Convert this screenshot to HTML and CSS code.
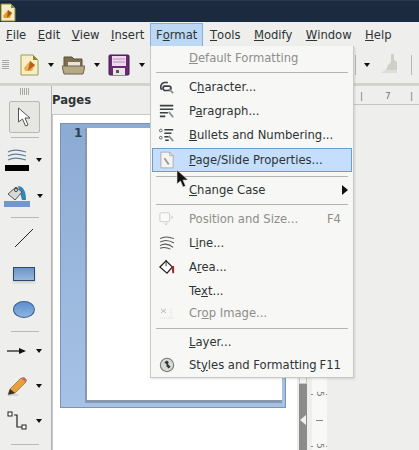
FILE: index.html
```html
<!DOCTYPE html>
<html lang="en">
<head>
<meta charset="utf-8">
<title>Format menu</title>
<link rel="stylesheet" href="styles.css">
</head>
<body>
<div class="app">
  <header class="titlebar">
    <svg class="title-icon" width="16" height="19" viewBox="0 0 16 19"><path d="M1 1h10l4 4v13H1z" fill="#f4ecc4" stroke="#8e8a3c"/><path d="M11 1l4 4h-4z" fill="#8e8a3c"/><path d="M3 13l5-6 4 3-2 5H4z" fill="#e99b2a"/><path d="M8 7l4 3-5 5z" fill="#a8551c"/></svg>
  </header>
  <nav class="menubar">
    <span class="menu-item"><u>F</u>ile</span>
    <span class="menu-item"><u>E</u>dit</span>
    <span class="menu-item"><u>V</u>iew</span>
    <span class="menu-item"><u>I</u>nsert</span>
    <span class="menu-item menu-item-open">F<u>o</u>rmat</span>
    <span class="menu-item"><u>T</u>ools</span>
    <span class="menu-item"><u>M</u>odify</span>
    <span class="menu-item"><u>W</u>indow</span>
    <span class="menu-item"><u>H</u>elp</span>
  </nav>
  <div class="toolbar">
    <span class="grip"></span>
    <svg class="tb-doc" width="19" height="22" viewBox="0 0 19 22"><path d="M1 1h12l5 5v15H1z" fill="#f6eec6" stroke="#a09c4a"/><path d="M13 1l5 5h-5z" fill="#8e8a3c"/><path d="M4 14l6-7 5 4-3 6H5z" fill="#eeb04e"/><path d="M10 7l5 4-7 6z" fill="#b4601e"/></svg>
    <span class="drop"></span>
    <svg class="tb-folder" width="23" height="21" viewBox="0 0 23 21"><path d="M2 3h8l2 2h8v12H2z" fill="#7d6f50" stroke="#5a5038"/><rect x="6" y="8" width="12" height="8" fill="#e8e4dc"/><path d="M0 12h23l-2 8H2z" fill="#b5a988" stroke="#6e6448"/></svg>
    <span class="drop"></span>
    <svg class="tb-save" width="22" height="22" viewBox="0 0 22 22"><rect x="1" y="1" width="20" height="20" rx="1" fill="#6a2a72" stroke="#42204c"/><rect x="4" y="2" width="14" height="10" fill="#f0d8ee"/><path d="M5 5h12M5 8h12" stroke="#b890b8"/><rect x="5" y="14" width="12" height="7" fill="#e8e6e0"/><rect x="8" y="16" width="3" height="3" fill="#555"/></svg>
    <span class="drop"></span>
    <span class="toolbar-spacer"></span>
    <span class="tb-sep"></span>
    <span class="drop drop-right"></span>
    <svg class="tb-brush" width="20" height="23" viewBox="0 0 20 23"><path d="M11 1h3v6l3 2v11H1c4-1 6-4 7-8l3-3z" fill="#cfcfc9"/><path d="M5 17h12v3H1z" fill="#deded8"/></svg>
    <span class="tb-sep tb-sep-last"></span>
  </div>
  <div class="main">
    <aside class="sidetools">
      <span class="side-grip"></span>
      <div class="select-tool">
        <svg width="15" height="20" viewBox="0 0 15 20"><path d="M1.500 1v14l4-3 3 7 2.500-1-3-7h5z" fill="#fff" stroke="#555" stroke-linejoin="round"/></svg>
      </div>
      <span class="side-sep"></span>
      <div class="tool tool-line-color">
        <div class="swatch-tool">
          <svg width="20" height="13" viewBox="0 0 20 13"><path d="M1 3c5-3 12-2 18 0M1 7c5-3 12-2 18 0M1 11c5-3 12-2 18 0" fill="none" stroke="#5f7f9f" stroke-width="1.200"/></svg>
          <span class="swatch swatch-black"></span>
        </div>
        <span class="drop"></span>
      </div>
      <div class="tool tool-area-color">
        <div class="swatch-tool">
          <svg width="22" height="16" viewBox="0 0 22 16"><path d="M12 1c5 0 8 5 8 14h-4z" fill="#2f86b8"/><path d="M2 9l8-7 6 5-7 8z" fill="#d8d8d4" stroke="#555"/><circle cx="10" cy="5" r="1.500" fill="#fff" stroke="#333"/></svg>
          <span class="swatch swatch-blue"></span>
        </div>
        <span class="drop"></span>
      </div>
      <span class="side-sep side-sep-area"></span>
      <div class="tool tool-shape tool-line">
        <svg width="20" height="20" viewBox="0 0 20 20"><path d="M1 19L19 1" stroke="#222"/></svg>
      </div>
      <div class="tool tool-shape tool-rect">
        <span class="rect-shape"></span>
      </div>
      <div class="tool tool-shape tool-ellipse">
        <span class="ellipse-shape"></span>
      </div>
      <span class="side-sep side-sep-ellipse"></span>
      <div class="tool tool-row tool-tall">
        <svg width="20" height="8" viewBox="0 0 20 8"><path d="M0 4h14" stroke="#111" stroke-width="1.200"/><path d="M12 1l7 3-7 3z" fill="#111"/></svg>
        <span class="drop"></span>
      </div>
      <div class="tool tool-row tool-short">
        <svg width="20" height="19" viewBox="0 0 20 19"><path d="M1 18l2-6L14 1l5 4L8 16z" fill="#e9a03c" stroke="#8a5a20" stroke-width=".6"/><path d="M14 1l5 4 1-2-3-3z" fill="#d0606a"/><path d="M1 18l2-6 5 4z" fill="#333"/><path d="M1 18h10" stroke="#bbb"/></svg>
        <span class="drop"></span>
      </div>
      <div class="tool tool-row tool-tall">
        <svg width="20" height="20" viewBox="0 0 20 20"><path d="M7 4h3v12h5" fill="none" stroke="#222" stroke-width="1.200"/><rect x="1" y="1" width="4" height="4" fill="#fff" stroke="#222"/><rect x="15" y="14" width="4" height="4" fill="#fff" stroke="#222"/></svg>
        <span class="drop"></span>
      </div>
      <span class="side-sep side-sep-end"></span>
    </aside>
    <section class="pages">
      <h2 class="pages-title">Pages</h2>
      <div class="pages-list">
        <div class="slide">
          <span class="slide-num">1</span>
          <div class="slide-page"></div>
        </div>
      </div>
    </section>
    <div class="splitter">
      <span class="splitter-top"></span>
      <div class="splitter-bar"><span class="splitter-arrow"></span></div>
    </div>
    <div class="editor">
      <div class="hruler">
        <span class="htick">|</span><span class="htick">7</span><span class="htick">|</span>
      </div>
      <div class="editor-body">
        <div class="vruler">
          <div class="vmark"><span class="vnum">5</span></div>
          <div class="vdash"></div>
          <div class="vmark"><span class="vnum">5</span></div>
        </div>
        <div class="canvas"></div>
      </div>
    </div>
  </div>

  <div class="format-menu">
    <div class="row row-first disabled"><span class="ico"></span><span class="lbl"><u>D</u>efault Formatting</span></div>
    <div class="sep sep-a"></div>
    <div class="row"><span class="ico"><svg width="16" height="16" viewBox="0 0 18 18"><path d="M3 12a5 5 0 0 1 3-8h4M5 8h6a2 2 0 0 1 0 5H7a2 2 0 0 1 0-5" fill="none" stroke="#3a3f44" stroke-width="1.800"/><path d="M11 11l5 5" stroke="#8b8f92" stroke-width="2"/></svg></span><span class="lbl">C<u>h</u>aracter...</span></div>
    <div class="row"><span class="ico"><svg width="16" height="16" viewBox="0 0 18 18"><path d="M1 3h15M1 7h15M1 11h9M1 15h6" stroke="#3a3f44" stroke-width="1.800"/><path d="M11 10l5 6" stroke="#8b8f92" stroke-width="2"/></svg></span><span class="lbl">P<u>a</u>ragraph...</span></div>
    <div class="row"><span class="ico"><svg width="16" height="16" viewBox="0 0 18 18"><circle cx="2" cy="4" r="1.500" fill="none" stroke="#555"/><circle cx="2" cy="12" r="1.500" fill="none" stroke="#555"/><path d="M6 3h10M6 7h8M6 11h5M7 15h4" stroke="#3a3f44" stroke-width="1.600"/><path d="M11 10l5 6" stroke="#8b8f92" stroke-width="2"/></svg></span><span class="lbl"><u>B</u>ullets and Numbering...</span></div>
    <div class="row row-active"><span class="ico"><svg width="14" height="18" viewBox="0 0 16 20"><path d="M1 1h10l4 4v14H1z" fill="#f4f4f2" stroke="#a8a8a8"/><path d="M11 1v4h4" fill="none" stroke="#a8a8a8"/><path d="M5 8l5 7" stroke="#999" stroke-width="2"/></svg></span><span class="lbl"><u>P</u>age/Slide Properties...</span></div>
    <div class="sep sep-b"></div>
    <div class="row"><span class="ico"></span><span class="lbl"><u>C</u>hange Case</span><span class="submenu-arrow"></span></div>
    <div class="sep sep-c"></div>
    <div class="row disabled"><span class="ico"><svg width="16" height="16" viewBox="0 0 18 18"><rect x="1" y="2" width="11" height="10" rx="1.500" fill="#fafaf8" stroke="#c6c9c6"/><path d="M14 5l2 2-2 2zM6 14h4l-2 2z" fill="#c6c9c6"/></svg></span><span class="lbl">Position and Size...</span><span class="key">F4</span></div>
    <div class="row"><span class="ico"><svg width="16" height="14" viewBox="0 0 18 16"><path d="M1 3c5-3 11-2 16 0M1 7c5-3 11-2 16 1M1 11c5-3 10-2 15 2M1 14c5-2 8-1 12 1" fill="none" stroke="#555" stroke-width="1.200"/></svg></span><span class="lbl">L<u>i</u>ne...</span></div>
    <div class="row"><span class="ico"><svg width="16" height="16" viewBox="0 0 18 18"><path d="M1 9l7-7 7 7-6 7z" fill="#fff" stroke="#222" stroke-width="1.400"/><path d="M8 1v7" stroke="#222"/><path d="M14 8h3v8h-2z" fill="#9c2f2f"/></svg></span><span class="lbl">A<u>r</u>ea...</span></div>
    <div class="row row-text"><span class="ico"></span><span class="lbl">Te<u>x</u>t...</span></div>
    <div class="row row-crop disabled"><span class="ico"><svg width="16" height="14" viewBox="0 0 16 14"><path d="M2 3l5 4M2 7l5-4" stroke="#b8b8b4"/><path d="M1 12h14M12 2v9" stroke="#dcdcd8" stroke-dasharray="1 1"/></svg></span><span class="lbl">Cr<u>o</u>p Image...</span></div>
    <div class="sep sep-d"></div>
    <div class="row row-tight"><span class="ico"></span><span class="lbl"><u>L</u>ayer...</span></div>
    <div class="row row-tight"><span class="ico"><svg width="16" height="16" viewBox="0 0 18 18"><circle cx="9" cy="9" r="7.500" fill="#d9d9d6" stroke="#77787a" stroke-width="1.200"/><path d="M6 6l3 3-1 1 3 3 2-2-3-3 1-2-2-2z" fill="#33373a"/></svg></span><span class="lbl">St<u>y</u>les and Formatting</span><span class="key">F11</span></div>
  </div>

  <svg class="cursor" width="14" height="19" viewBox="0 0 14 19"><path d="M1 1v14l3.500-3 2.500 6 2.500-1-2.500-6h5z" fill="#111" stroke="#ddd" stroke-width=".6"/></svg>
</div>
</body>
</html>
```
FILE: styles.css
```css
* { box-sizing: border-box; }
html, body { margin: 0; padding: 0; }
body { background: #eeeeec; font-family: "DejaVu Sans", sans-serif; font-size: 11.6px; color: #2e3436; }
.app { position: relative; width: 419px; height: 450px; overflow: hidden; display: flex; flex-direction: column; background: #eeeeec; }

.titlebar { height: 22px; flex: none; background: #1b2a3e; border-top: 1px solid #2a3a4e; }
.title-icon { display: block; margin-top: 2px; }

.menubar { height: 24px; flex: none; display: flex; align-items: stretch; background: #eeeeec; padding-top: 1px; }
.menu-item { display: flex; align-items: center; padding: 0 5.750px 0 5.750px; white-space: pre; }
.menubar .menu-item:first-child { padding-left: 6px; }
.menu-item-open { background: #bcd8f4; border: 1px solid #88b0d8; border-bottom: 0; padding: 0 5px; }
.menu-item-open ~ .menu-item { padding: 0 6.700px; }

.toolbar { height: 40px; flex: none; display: flex; align-items: center; padding-left: 2px; background: #eeeeec; border-bottom: 3px solid #d2d2ce; }
.grip { width: 7px; height: 10px; margin-right: 11px; background: repeating-linear-gradient(#a8a8a4 0 1px, transparent 1px 2px); }
.drop { flex: none; width: 0; height: 0; border-left: 3.500px solid transparent; border-right: 3.500px solid transparent; border-top: 4px solid #111; }
.toolbar .drop { margin: 0 8px 0 9px; }
.toolbar-spacer { flex: 1; }
.tb-sep { width: 1px; height: 20px; background: #b8b8b4; }
.toolbar .drop-right { margin: 0 10px 0 8px; }
.tb-sep-last { margin: 0 7px 0 11px; }

.main { flex: 1; min-height: 0; display: flex; }

.sidetools { width: 52px; flex: none; display: flex; flex-direction: column; align-items: flex-start; border-right: 1px solid #b4b4b0; background: #eeeeec; }
.side-grip { width: 9px; height: 7px; margin: 2px 0 0 20px; background: repeating-linear-gradient(90deg, #a8a8a4 0 1px, transparent 1px 2px); }
.select-tool { width: 31px; height: 32px; margin: 6px 0 0 9px; display: flex; align-items: center; justify-content: center; background: #e6e6e3; border: 1px solid #b8b8b4; border-radius: 2px; }
.side-sep { width: 28px; height: 1px; flex: none; margin-left: 11px; background: #b8b8b4; }
.select-tool + .side-sep { margin-top: 4px; }
.tool { display: flex; align-items: center; flex: none; }
.tool-line-color { height: 32px; margin-top: 6px; padding-left: 5px; gap: 7px; }
.tool-area-color { height: 34px; margin-top: 3px; padding-left: 4px; gap: 7px; }
.swatch-tool { display: flex; flex-direction: column; align-items: center; }
.swatch { display: block; height: 6px; }
.swatch-black { width: 24px; background: #000; margin-top: 3px; }
.swatch-blue { width: 26px; background: #7396cf; }
.side-sep-area { margin-top: 4px; }
.tool-shape { width: 48px; justify-content: center; }
.tool-line { height: 40px; }
.tool-rect { height: 32px; }
.tool-ellipse { height: 38px; }
.rect-shape { width: 22px; height: 14px; background: linear-gradient(#6c94c8, #9ab8dc); border: 1px solid #2c4a6c; box-shadow: 0 2px 2px #d0d0cc; }
.ellipse-shape { width: 22px; height: 17px; border-radius: 50%; background: linear-gradient(#5c90d0, #8cb4e0); border: 1px solid #3c5c88; }
.side-sep-ellipse { margin-top: 3px; }
.tool-row { padding-left: 7px; gap: 9px; }
.tool-tall { height: 38px; }
.tool-short { height: 32px; }
.side-sep-end { margin-top: 4px; }

.pages { width: 245px; flex: none; background: #eeeeec; display: flex; flex-direction: column; }
.pages-title { margin: 6px 0 0 0; height: 22px; font-size: 11.6px; font-weight: bold; line-height: 16px; }
.pages-list { flex: 1; background: #fff; border-top: 1px solid #c8c8c4; border-left: 1px solid #c8c8c4; padding: 8px 0 0 7px; }
.slide { width: 226px; height: 285px; display: flex; background: linear-gradient(#8cabd2, #a6c2e6); border: 1px solid #7c94b4; padding: 4px 3px 0 24px; position: relative; }
.slide-num { position: absolute; left: 13px; top: 2px; font-weight: bold; font-size: 12px; color: #2e3f58; }
.slide-page { flex: 1; height: 275px; background: #fff; border: solid #8698b0; border-width: 0 0 3px 2px; }

.splitter { width: 8px; flex: none; margin-left: 2px; display: flex; flex-direction: column; }
.splitter-top { height: 298px; flex: none; background: #f2f2f0; border: 1px solid #c8c8c4; }
.splitter-bar { flex: 1; display: flex; align-items: flex-start; justify-content: center; padding-top: 31px; background: #8c8c8a; }
.splitter-arrow { width: 0; height: 0; border-top: 5px solid transparent; border-bottom: 5px solid transparent; border-right: 6px solid #f2f2f0; }

.editor { flex: 1; min-width: 0; display: flex; flex-direction: column; }
.hruler { height: 18px; flex: none; margin-top: 1px; display: flex; align-items: center; justify-content: flex-end; gap: 22px; padding-right: 6px; border-bottom: 1px solid #c4c4c0; font-size: 9px; color: #777; }
.htick { width: 3px; text-align: center; }
.editor-body { flex: 1; min-height: 0; display: flex; }
.vruler { width: 20px; flex: none; display: flex; flex-direction: column; align-items: center; padding: 283px 0 0 5px; background: linear-gradient(90deg, #eeeeec 0 5px, #f8f8f6 5px); color: #777; }
.vmark { height: 12px; flex: none; display: flex; align-items: center; gap: 2px; font-size: 9px; line-height: 9px; }
.vmark::before, .vmark::after { content: ""; width: 2px; height: 1px; background: #888; }
.vnum { writing-mode: vertical-rl; }
.vdash { width: 7px; height: 1px; flex: none; margin: 19.500px 0; background: #888; }
.canvas { flex: 1; background: #eeeeec; }

.format-menu { position: absolute; left: 150px; top: 46px; width: 204px; padding: 0 0 1px 0; background: #f7f7f5; border: 1px solid #c8c8c4; border-top: 0; box-shadow: 1px 1px 2px rgba(0,0,0,.12); display: flex; flex-direction: column; }
.row { height: 24px; flex: none; display: flex; align-items: center; padding-right: 12px; white-space: pre; }
.row-first { height: 23px; }
.row-tight { height: 23px; }
.row-text { height: 23px; }
.row-crop { height: 21px; }
.ico { width: 38px; flex: none; display: flex; justify-content: center; padding: 0 7px 0 1px; }
.lbl { flex: 1; }
.disabled { color: #8e8e8b; }
.key { flex: none; }
.sep { flex: none; position: relative; }
.sep::after { content: ""; position: absolute; left: 5px; right: 5px; height: 1px; background: #b4b4b0; }
.sep-a { height: 6px; }
.sep-a::after { top: 3px; }
.sep-b { height: 7px; }
.sep-b::after { top: 5px; }
.sep-c { height: 5px; }
.sep-c::after { top: 2px; }
.sep-d { height: 7px; }
.sep-d::after { top: 5px; }
.row-active { background: #c4defb; outline: 1px solid #6f9ccb; outline-offset: -1px; margin: 1px 1px -1px; padding-right: 10px; }
.row-active .ico { width: 37px; padding-left: 0; }
.submenu-arrow { width: 0; height: 0; border-top: 5px solid transparent; border-bottom: 5px solid transparent; border-left: 6px solid #111; margin-right: -7px; }

.cursor { position: absolute; left: 176px; top: 169px; }
```
